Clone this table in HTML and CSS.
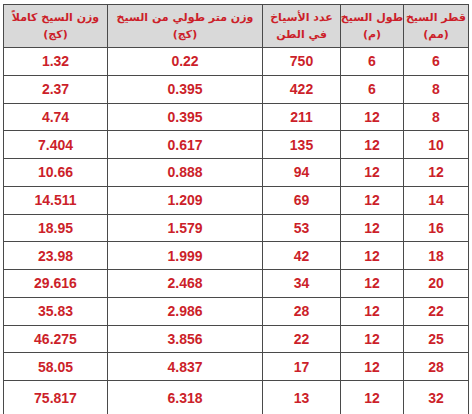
FILE: index.html
```html
<!DOCTYPE html>
<html lang="ar">
<head>
<meta charset="utf-8">
<link rel="stylesheet" href="styles.css">
</head>
<body>
<table class="rebar" dir="rtl">
  <colgroup>
    <col class="c-dia"><col class="c-len"><col class="c-count"><col class="c-mweight"><col class="c-weight">
  </colgroup>
  <thead>
    <tr>
      <th>قطر السيخ<br>(مم)</th>
      <th>طول السيخ<br>(م)</th>
      <th>عدد الأسياخ<br>في الطن</th>
      <th>وزن متر طولي من السيخ<br>(كج)</th>
      <th>وزن السيخ كاملاً<br>(كج)</th>
    </tr>
  </thead>
  <tbody>
    <tr><td>6</td><td>6</td><td>750</td><td>0.22</td><td>1.32</td></tr>
    <tr><td>8</td><td>6</td><td>422</td><td>0.395</td><td>2.37</td></tr>
    <tr><td>8</td><td>12</td><td>211</td><td>0.395</td><td>4.74</td></tr>
    <tr><td>10</td><td>12</td><td>135</td><td>0.617</td><td>7.404</td></tr>
    <tr><td>12</td><td>12</td><td>94</td><td>0.888</td><td>10.66</td></tr>
    <tr><td>14</td><td>12</td><td>69</td><td>1.209</td><td>14.511</td></tr>
    <tr><td>16</td><td>12</td><td>53</td><td>1.579</td><td>18.95</td></tr>
    <tr><td>18</td><td>12</td><td>42</td><td>1.999</td><td>23.98</td></tr>
    <tr><td>20</td><td>12</td><td>34</td><td>2.468</td><td>29.616</td></tr>
    <tr><td>22</td><td>12</td><td>28</td><td>2.986</td><td>35.83</td></tr>
    <tr><td>25</td><td>12</td><td>22</td><td>3.856</td><td>46.275</td></tr>
    <tr><td>28</td><td>12</td><td>17</td><td>4.837</td><td>58.05</td></tr>
    <tr class="last"><td>32</td><td>12</td><td>13</td><td>6.318</td><td>75.817</td></tr>
  </tbody>
</table>
</body>
</html>
```
FILE: styles.css
```css
html, body {
  margin: 0;
  padding: 0;
  background: #ffffff;
}
body {
  padding: 4px 0 0 3px;
}
.rebar {
  border-collapse: collapse;
  table-layout: fixed;
  width: 466px;
  font-family: "Liberation Sans", Arial, sans-serif;
  font-weight: bold;
  color: #cc1f2a;
  border: 1px solid #555555;
}
.c-dia { width: 65px; }
.c-len { width: 63px; }
.c-count { width: 78px; }
.c-mweight { width: 155px; }
.c-weight { width: 104px; }
.rebar th,
.rebar td {
  border: 1px solid #4a4a4a;
  text-align: center;
  padding: 0;
}
.rebar th {
  height: 42px;
  background: #d9d9d9;
  font-family: "DejaVu Sans", "Liberation Sans", sans-serif;
  font-size: 11px;
  line-height: 17px;
  font-weight: bold;
  color: #cc1f2a;
  white-space: nowrap;
  overflow: hidden;
}
.rebar td {
  height: 26.75px;
  font-size: 14px;
}
.rebar .last td {
  height: 33px;
}
```
